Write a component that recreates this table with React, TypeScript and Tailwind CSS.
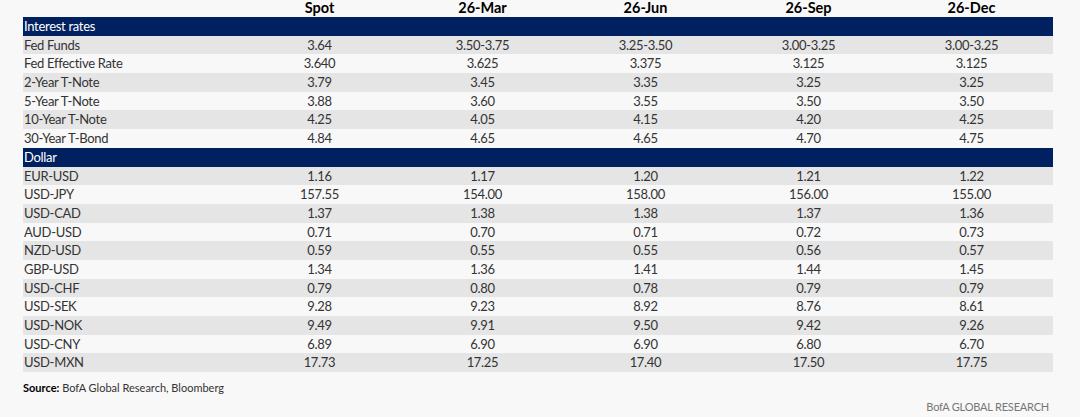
const columns = ['Spot', '26-Mar', '26-Jun', '26-Sep', '26-Dec'];

const sections: { title: string; rows: [string, string[]][] }[] = [
  {
    title: 'Interest rates',
    rows: [
      ['Fed Funds', ['3.64', '3.50-3.75', '3.25-3.50', '3.00-3.25', '3.00-3.25']],
      ['Fed Effective Rate', ['3.640', '3.625', '3.375', '3.125', '3.125']],
      ['2-Year T-Note', ['3.79', '3.45', '3.35', '3.25', '3.25']],
      ['5-Year T-Note', ['3.88', '3.60', '3.55', '3.50', '3.50']],
      ['10-Year T-Note', ['4.25', '4.05', '4.15', '4.20', '4.25']],
      ['30-Year T-Bond', ['4.84', '4.65', '4.65', '4.70', '4.75']],
    ],
  },
  {
    title: 'Dollar',
    rows: [
      ['EUR-USD', ['1.16', '1.17', '1.20', '1.21', '1.22']],
      ['USD-JPY', ['157.55', '154.00', '158.00', '156.00', '155.00']],
      ['USD-CAD', ['1.37', '1.38', '1.38', '1.37', '1.36']],
      ['AUD-USD', ['0.71', '0.70', '0.71', '0.72', '0.73']],
      ['NZD-USD', ['0.59', '0.55', '0.55', '0.56', '0.57']],
      ['GBP-USD', ['1.34', '1.36', '1.41', '1.44', '1.45']],
      ['USD-CHF', ['0.79', '0.80', '0.78', '0.79', '0.79']],
      ['USD-SEK', ['9.28', '9.23', '8.92', '8.76', '8.61']],
      ['USD-NOK', ['9.49', '9.91', '9.50', '9.42', '9.26']],
      ['USD-CNY', ['6.89', '6.90', '6.90', '6.80', '6.70']],
      ['USD-MXN', ['17.73', '17.25', '17.40', '17.50', '17.75']],
    ],
  },
];

const grid = 'grid grid-cols-[215px_repeat(5,163px)]';

export default function App() {
  return (
    <div className="w-[1080px] h-[417px] bg-[#f8f8f8] text-[#333] font-['Lato','Liberation_Sans',sans-serif] overflow-hidden">
      <div className="ml-[23px] w-[1030px]">
        <div className={`${grid} h-[17px] items-center text-[14.5px] font-bold text-black`}>
          <div />
          {columns.map((c) => (
            <div key={c} className="text-center leading-none">{c}</div>
          ))}
        </div>
        {sections.map((s) => (
          <div key={s.title}>
            <div className="h-[18.7px] bg-[#002060] text-white text-[13px] tracking-[-0.3px] leading-[18.7px] pl-[1px]">{s.title}</div>
            {s.rows.map(([label, vals], i) => (
              <div
                key={label}
                className={`${grid} h-[18.7px] items-center text-[13px] tracking-[-0.3px] ${i % 2 === 0 ? 'bg-[#e5e5e5]' : 'bg-[#f8f8f8]'}`}
              >
                <div className="pl-[1px]">{label}</div>
                {vals.map((v, j) => (
                  <div key={j} className="text-center">{v}</div>
                ))}
              </div>
            ))}
          </div>
        ))}
        <div className="mt-[8px] text-[11px] text-[#333]">
          <span className="font-bold text-black">Source:</span> BofA Global Research, Bloomberg
        </div>
        <div className="mt-[2px] text-right pr-[4px] text-[11px] tracking-[-0.2px] text-[#777]">BofA GLOBAL RESEARCH</div>
      </div>
    </div>
  );
}
